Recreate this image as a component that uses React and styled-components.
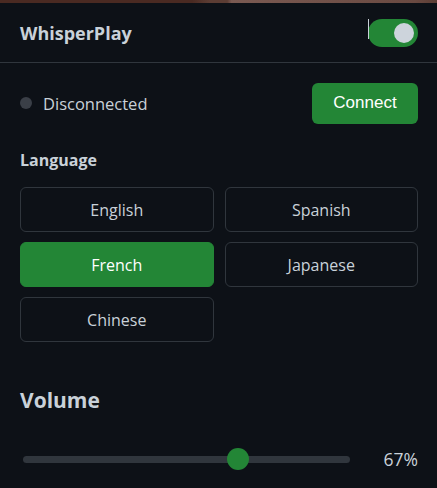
import React, { useState } from "react";
import styled, { createGlobalStyle } from "styled-components";

const Global = createGlobalStyle`
  html, body { margin: 0; padding: 0; background: #0d1117; }
  body { font-family: "Open Sans", "Noto Sans", sans-serif; color: #c9d1d9; }
  * { box-sizing: border-box; }
`;

const Page = styled.div`
  width: 437px;
  height: 488px;
  overflow: hidden;
  background: #0d1117;
  display: flex;
  flex-direction: column;
`;

const TopStrip = styled.div`
  height: 3px;
  background: linear-gradient(90deg, #4a2a22 0%, #4a2a22 44%, #5c3d34 48%, #5c3d34 52%, #7a5a52 53%, #6a4a42 95%, #5c3d34 100%);
`;

const Header = styled.header`
  display: flex;
  align-items: center;
  justify-content: space-between;
  padding: 16px 19px 15px 20px;
  border-bottom: 1px solid #30363d;
`;

const Title = styled.h1`
  margin: 0;
  font-size: 18px;
  font-weight: 700;
  color: #c9d1d9;
  line-height: 28px;
`;

const ToggleWrap = styled.div`
  position: relative;
`;

const Caret = styled.span`
  position: absolute;
  left: 0;
  top: 0;
  width: 1px;
  height: 20px;
  background: #c9d1d9;
`;

const Toggle = styled.button`
  width: 50px;
  height: 28px;
  border-radius: 14px;
  border: none;
  background: ${(p) => (p.$on ? "#238636" : "#30363d")};
  display: flex;
  align-items: center;
  justify-content: ${(p) => (p.$on ? "flex-end" : "flex-start")};
  padding: 0 4px;
  cursor: pointer;
`;

const Knob = styled.span`
  width: 20px;
  height: 20px;
  border-radius: 50%;
  background: #cdd4dc;
`;

const Body = styled.main`
  padding: 20px 19px 0 20px;
  display: flex;
  flex-direction: column;
`;

const StatusRow = styled.div`
  display: flex;
  align-items: center;
  justify-content: space-between;
`;

const Status = styled.div`
  display: flex;
  align-items: center;
  gap: 11px;
  font-size: 16.5px;
  color: #c9d1d9;
`;

const Dot = styled.span`
  width: 12px;
  height: 12px;
  border-radius: 50%;
  background: #3a3f47;
  margin-top: -2px;
`;

const ConnectButton = styled.button`
  width: 106px;
  height: 41px;
  border: none;
  border-radius: 6px;
  background: #238636;
  color: #ffffff;
  font-family: "Liberation Sans", Arial, sans-serif;
  font-size: 17px;
  font-weight: 500;
  cursor: pointer;
  padding-bottom: 3px;
`;

const Label = styled.h2`
  margin: 26px 0 17px;
  font-size: 16px;
  font-weight: 700;
  line-height: 20px;
  color: #c9d1d9;
`;

const Grid = styled.div`
  display: grid;
  grid-template-columns: 1fr 1fr;
  column-gap: 11px;
  row-gap: 10px;
`;

const LangButton = styled.button`
  height: 45px;
  border-radius: 6px;
  border: 1px solid ${(p) => (p.$active ? "#238636" : "#30363d")};
  background: ${(p) => (p.$active ? "#238636" : "transparent")};
  color: ${(p) => (p.$active ? "#ffffff" : "#c9d1d9")};
  font-family: "Open Sans", "Noto Sans", sans-serif;
  font-size: 16px;
  cursor: pointer;
`;

const VolumeTitle = styled.h2`
  margin: 44px 0 0;
  font-size: 21px;
  font-weight: 700;
  line-height: 28px;
  color: #c9d1d9;
`;

const SliderRow = styled.div`
  margin-top: 33px;
  display: flex;
  align-items: center;
  gap: 33px;
`;

const Track = styled.div`
  position: relative;
  flex: 1;
  height: 7px;
  margin-left: 3px;
  border-radius: 4px;
  background: #30363d;
`;

const Thumb = styled.span`
  position: absolute;
  top: 50%;
  width: 22px;
  height: 22px;
  margin-left: -11px;
  margin-top: -11px;
  border-radius: 50%;
  background: #238636;
`;

const Value = styled.span`
  font-size: 17.5px;
  color: #c9d1d9;
  width: 35px;
  text-align: right;
`;

const languages = ["English", "Spanish", "French", "Japanese", "Chinese"];

export default function App() {
  const [on, setOn] = useState(true);
  const [lang, setLang] = useState("French");
  const volume = 67;
  return (
    <Page>
      <Global />
      <TopStrip />
      <Header>
        <Title>WhisperPlay</Title>
        <ToggleWrap>
          <Caret />
          <Toggle $on={on} onClick={() => setOn(!on)} aria-label="Toggle">
            <Knob />
          </Toggle>
        </ToggleWrap>
      </Header>
      <Body>
        <StatusRow>
          <Status>
            <Dot />
            Disconnected
          </Status>
          <ConnectButton>Connect</ConnectButton>
        </StatusRow>
        <Label>Language</Label>
        <Grid>
          {languages.map((l) => (
            <LangButton key={l} $active={l === lang} onClick={() => setLang(l)}>
              {l}
            </LangButton>
          ))}
        </Grid>
        <VolumeTitle>Volume</VolumeTitle>
        <SliderRow>
          <Track>
            <Thumb style={{ left: `calc(${volume / 100} * (100% - 22px) + 11px)` }} />
          </Track>
          <Value>{volume}%</Value>
        </SliderRow>
      </Body>
    </Page>
  );
}
